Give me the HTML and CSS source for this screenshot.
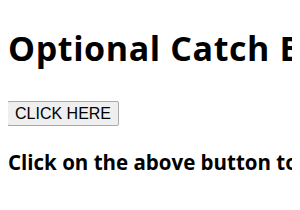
FILE: index.html
```html
<!DOCTYPE html>
<html lang="en">
<head>
  <meta charset="UTF-8" />
  <title>Optional Catch Binding</title>
  <link rel="stylesheet" href="styles.css">
</head>
<body>
  <h1 class="title">Optional Catch Binding</h1>
  <button class="click-btn">CLICK HERE</button>
  <h3 class="hint">Click on the above button to see the result</h3>
</body>
</html>
```

FILE: styles.css
```css
body {
  margin: 0 8px;
  font-family: "Open Sans", sans-serif;
  color: #000;
  background: #fff;
  white-space: nowrap;
  overflow: hidden;
}

.title {
  font-size: 34px;
  line-height: 40px;
  letter-spacing: 0.6px;
  font-weight: 700;
  margin: 0;
  padding-top: 28px;
  margin-bottom: 33px;
}

.click-btn {
  display: block;
  height: 25px;
  margin-left: -1px;
  padding: 0 7px;
  font-family: "Liberation Sans", Arial, sans-serif;
  font-size: 16px;
  background: #efefef;
  border: 1px solid #a9a9a9;
  border-radius: 2px;
  color: #000;
}

.hint {
  font-size: 20.5px;
  line-height: 24px;
  font-weight: 700;
  margin: 24px 0 0;
}
```
